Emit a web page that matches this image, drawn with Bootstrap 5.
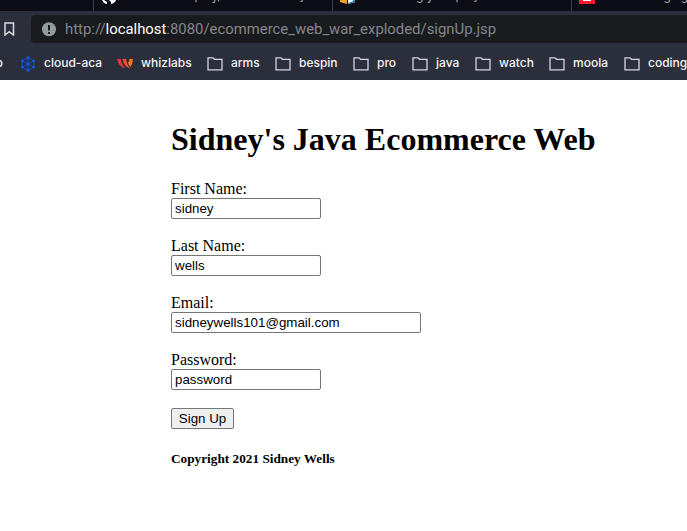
<!DOCTYPE html>
<html lang="en">
<head>
<meta charset="utf-8">
<title>Sign Up</title>
<link href="https://cdn.jsdelivr.net/npm/bootstrap@5.3.0/dist/css/bootstrap.min.css" rel="stylesheet">
<style>
body{font-family:"Liberation Serif",serif;font-size:16px;line-height:18px;color:#000;background:#fff}
.chrome-ui{background:#2b2e3b;height:80px;font-family:Inter,sans-serif}
.tabstrip{height:11px;background:#0c0c16;color:#a9abb3;font-size:12px}
.tab-item{height:11px;border-right:1px solid #3c3d45;flex:none}
.tab-item span{line-height:14px;margin-top:-11px;white-space:nowrap}
.t1{width:94px}.t2{width:239px;padding-left:7px}.t3{width:239px;padding-left:6px}.t4{width:115px;padding-left:7px;border:0}
.tab-item svg{flex:none;margin-right:7px}
.toolbar-row{height:36px;padding:4px 0 4px 4px}
.address{height:28px;margin-left:16px;background:#191a1e;border-radius:4px 0 0 4px;padding-left:11px;font-family:Roboto,sans-serif;font-size:14.88px;color:#85878b}
.address b{font-weight:400;color:#fff}
.bookmarks{height:33px;font-size:12px;font-weight:500;color:#f4f4f7}
.bm{flex:none;white-space:nowrap}
.bm svg{flex:none}
.bm span{margin-left:8px;padding-bottom:2px}
.bm .cut{margin-left:0}
.page{padding:41px 0 0 171px}
.page h1{font-size:32px;font-weight:700;line-height:37px;margin:0 0 22px}
.field{margin-bottom:18px}
.field label{height:18px;line-height:18px}
.field input,.send{font:13.33px/15px "Liberation Sans",Arial,sans-serif;color:#000;border:1px solid #767676;border-radius:2px}
.field input{width:150px;height:21px;padding:1px 3px;background:#fff}
.field .wide{width:250px}
.send{height:21px;width:63px;padding:0;background:#efefef}
.copy{font-size:13.28px;font-weight:700;line-height:15px;margin:22px 0 0}
</style>
</head>
<body>
<header class="chrome-ui overflow-hidden">
<div class="tabstrip d-flex overflow-hidden">
<div class="tab-item t1 d-flex"></div>
<div class="tab-item t2 d-flex"><svg width="16" height="5" viewBox="0 0 16 5"><path d="M1 0Q3 4 6 4V2L3 0ZM8 0H15Q14 3 10 4V2Z" fill="#fff"/></svg><span>ecommerce play/internet store java</span></div>
<div class="tab-item t3 d-flex"><svg width="17" height="5" viewBox="0 0 17 5"><path d="M1 0H8V4L1 2Z" fill="#f6a02c"/><path d="M9 0H16V2L9 4Z" fill="#fff"/><path d="M16 0V2L9 4V3L14 1V0Z" fill="#2388c9"/></svg><span>Submitting your project</span></div>
<div class="tab-item t4 d-flex"><svg width="16" height="4" viewBox="0 0 16 4"><path d="M0 0H16V4H0Z" fill="#fb1b2d"/><path d="M4 0H12V1H4Z" fill="#fff"/></svg><span>Start managing</span></div>
</div>
<div class="toolbar-row d-flex align-items-center">
<svg width="11" height="14" viewBox="0 0 11 14" fill="none" stroke="#dadbe2" stroke-width="1.5"><path d="M1 1H9.5V13L5.2 9.7 1 13Z"/></svg>
<div class="address flex-grow-1 d-flex align-items-center"><svg class="me-2" width="15" height="15" viewBox="0 0 15 15"><circle cx="7" cy="7.3" r="7" fill="#929ba0"/><path d="M6 3H8V8.5H6ZM6 10H8V12H6Z" fill="#191a1e"/></svg><span>http://<b>localhost</b>:8080/ecommerce_web_war_exploded/signUp.jsp</span></div>
</div>
<nav class="bookmarks d-flex align-items-center" id="bms"></nav>
</header>
<main class="page">
<h1>Sidney's Java Ecommerce Web</h1>
<form>
<div class="field d-flex flex-column align-items-start"><label for="fn">First Name:</label><input id="fn" value="sidney"></div>
<div class="field d-flex flex-column align-items-start"><label for="ln">Last Name:</label><input id="ln" value="wells"></div>
<div class="field d-flex flex-column align-items-start"><label for="em">Email:</label><input id="em" class="wide" value="sidneywells101@gmail.com"></div>
<div class="field d-flex flex-column align-items-start"><label for="pw">Password:</label><input id="pw" value="password"></div>
<button type="button" class="send d-block">Sign Up</button>
</form>
<p class="copy">Copyright 2021 Sidney Wells</p>
</main>
<script src="https://cdn.jsdelivr.net/npm/bootstrap@5.3.0/dist/js/bootstrap.bundle.min.js"></script>
<script>
const folder='<svg width="16" height="14" viewBox="0 0 16 14" fill="none" stroke="#d5d6e4" stroke-width="1.3"><path d="M1 12.8V.8H6L7.5 2.3H15V12.8Z"/></svg>';
const cloud='<svg width="16" height="16" viewBox="0 0 16 16" fill="none" stroke="#0b4cc0" stroke-width="1"><path d="M8 1.5L13.5 4.7V11.3L8 14.5 2.5 11.3V4.7ZM8 2V14M3 5L13 11M13 5L3 11"/><g fill="#0c56d3" stroke="none"><circle cx="8" cy="8" r="1.8"/><circle cx="8" cy="2" r="1.7"/><circle cx="8" cy="14" r="1.7"/><circle cx="2.3" cy="5" r="1.6"/><circle cx="13.7" cy="5" r="1.6"/><circle cx="2.3" cy="11" r="1.6"/><circle cx="13.7" cy="11" r="1.6"/></g></svg>';
const whiz='<svg width="16" height="10" viewBox="0 0 16 10"><path d="M0 0H3.5Q4.5 5 8 9.5Q2 8 0 0Z" fill="#e9353a"/><path d="M5.5 0H9Q9.5 5 13 9.5Q7 8 5.5 0Z" fill="#f4502e"/><path d="M12.5 0H16Q15.5 5 13.5 8Q11.5 6 11 3.5Q12.5 2.5 12.5 0Z" fill="#ff7426"/></svg>';
// name, icon, icon x, label x, label width
const items=[['p','',-4.5,0,8],['cloud-aca',cloud,20,44,57],['whizlabs',whiz,117,141,49],['arms',folder,207,231,28],['bespin',folder,275,299,38],['pro',folder,353,377,19],['java',folder,412,436,23],['watch',folder,475,499,34],['moola',folder,549,573,35],['coding',folder,624,648,39]];
let edge=0;
document.getElementById('bms').innerHTML=items.map(([n,i,x,t,w])=>{const end=i?t+w:3;const s=`<div class="bm d-flex align-items-center" style="margin-left:${x-edge}px;width:${end-x}px">${i}<span class="${i?'':'cut'}">${n}</span></div>`;edge=end;return s}).join('');
</script>
</body>
</html>
